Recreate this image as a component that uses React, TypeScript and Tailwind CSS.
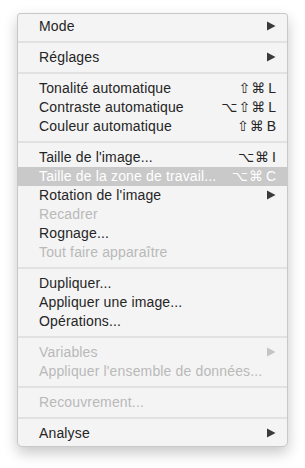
type Item =
  | { kind: "sep" }
  | {
      kind: "item";
      label: string;
      shortcut?: string;
      submenu?: boolean;
      disabled?: boolean;
      active?: boolean;
    };

const items: Item[] = [
  { kind: "item", label: "Mode", submenu: true },
  { kind: "sep" },
  { kind: "item", label: "Réglages", submenu: true },
  { kind: "sep" },
  { kind: "item", label: "Tonalité automatique", shortcut: "⇧⌘L" },
  { kind: "item", label: "Contraste automatique", shortcut: "⌥⇧⌘L" },
  { kind: "item", label: "Couleur automatique", shortcut: "⇧⌘B" },
  { kind: "sep" },
  { kind: "item", label: "Taille de l'image...", shortcut: "⌥⌘I" },
  { kind: "item", label: "Taille de la zone de travail...", shortcut: "⌥⌘C", active: true },
  { kind: "item", label: "Rotation de l'image", submenu: true },
  { kind: "item", label: "Recadrer", disabled: true },
  { kind: "item", label: "Rognage..." },
  { kind: "item", label: "Tout faire apparaître", disabled: true },
  { kind: "sep" },
  { kind: "item", label: "Dupliquer..." },
  { kind: "item", label: "Appliquer une image..." },
  { kind: "item", label: "Opérations..." },
  { kind: "sep" },
  { kind: "item", label: "Variables", submenu: true, disabled: true },
  { kind: "item", label: "Appliquer l'ensemble de données...", disabled: true },
  { kind: "sep" },
  { kind: "item", label: "Recouvrement...", disabled: true },
  { kind: "sep" },
  { kind: "item", label: "Analyse", submenu: true },
];

function Arrow({ color }: { color: string }) {
  return (
    <svg width="9" height="10" viewBox="0 0 9 10" className="block">
      <polygon points="0,0.5 8.5,5 0,9.5" fill={color} />
    </svg>
  );
}

function Shortcut({ keys }: { keys: string }) {
  // the last char is a letter, the rest are modifier glyphs
  const mods = keys.slice(0, -1).split("");
  const letter = keys.slice(-1);
  return (
    <span className="flex items-center gap-[1px]">
      {mods.map((m, i) => (
        <span key={i} className="font-['DejaVu_Sans',sans-serif] text-[14px] leading-none">
          {m}
        </span>
      ))}
      <span className="ml-[2px] font-['Liberation_Sans',Arial,sans-serif] text-[14px] leading-none">{letter}</span>
    </span>
  );
}

export default function App() {
  return (
    <div className="min-h-screen w-[305px] bg-white pl-[17px] pt-[13px]">
      <div className="w-[271px] rounded-t-[3px] rounded-b-[5px] border border-[#c8c8c8] bg-[#f4f4f4] py-[3px] font-['Liberation_Sans',Arial,sans-serif] text-[14px] shadow-[0_6px_14px_rgba(0,0,0,0.22)]">
        {items.map((it, i) => {
          if (it.kind === "sep") {
            return (
              <div key={i} className="flex h-[12px] items-center">
                <div className="h-[2px] w-full bg-[#e2e2e2]" />
              </div>
            );
          }
          const color = it.active ? "text-white" : it.disabled ? "text-[#b9b9b9]" : "text-[#252525]";
          const arrowColor = it.disabled ? "#c4c4c4" : "#3a3a3a";
          return (
            <div
              key={i}
              className={`flex h-[19px] items-center justify-between pb-[2px] pl-[21px] pr-[11px] ${color} ${
                it.active ? "bg-[#c9c9c9]" : ""
              }`}
            >
              <span className="leading-none tracking-[0.15px]">{it.label}</span>
              {it.shortcut && <Shortcut keys={it.shortcut} />}
              {it.submenu && <Arrow color={arrowColor} />}
            </div>
          );
        })}
      </div>
    </div>
  );
}
